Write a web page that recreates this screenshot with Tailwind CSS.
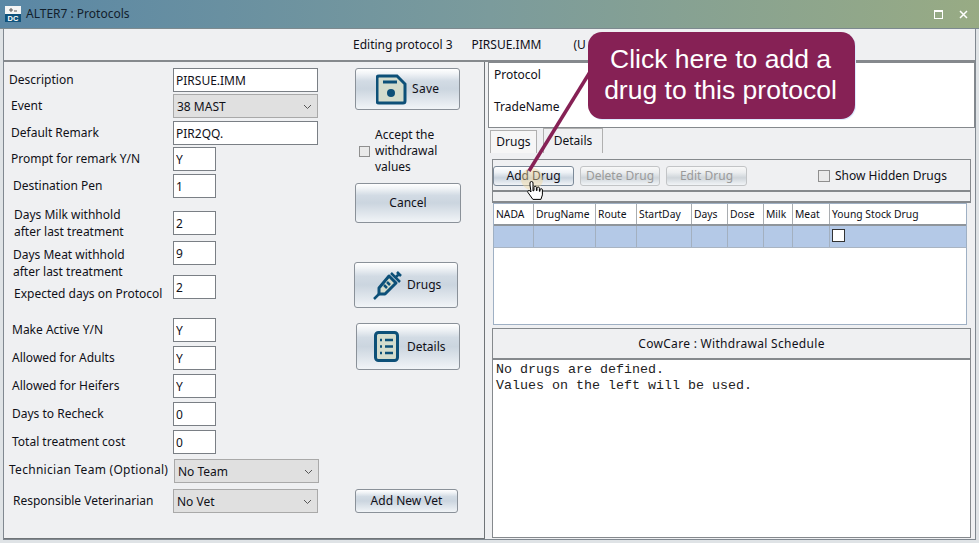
<!DOCTYPE html>
<html lang="en">
<head>
  <meta charset="UTF-8">
  <script src="https://cdn.jsdelivr.net/npm/@tailwindcss/browser@4"></script>
  <title>ALTER7 : Protocols</title>
</head>
<body>
  <div class="relative w-[979px] h-[543px] overflow-hidden flex flex-col bg-[#dfe3e6] font-['Noto_Sans',sans-serif] text-[12px] text-[#101018]">

    <!-- title bar -->
    <div class="h-[29px] flex-none flex items-center bg-[linear-gradient(90deg,#5a87a5,#7b9b9c_50%,#98ab84)] border-b border-[#7d8a8f]">
      <svg class="ml-[5px] w-[16px] h-[16px]" viewBox="0 0 16 16">
        <rect width="16" height="8" fill="#f4f4f4"/>
        <rect y="8" width="16" height="8" fill="#0f527c"/>
        <path d="M4 4h4M6 2v4M9 5h3" stroke="#555" stroke-width="1" fill="none"/>
        <text x="8" y="15" text-anchor="middle" font-family="Liberation Sans" font-weight="700" font-size="7.500" fill="#fff">DC</text>
      </svg>
      <span class="ml-[5px] text-[#12202c]">ALTER7 : Protocols</span>
      <div class="ml-auto mr-[11px] flex items-center gap-[16px]">
        <span class="w-[9px] h-[9px] border border-white border-t-2"></span>
        <svg class="w-[9px] h-[9px]" viewBox="0 0 9 9"><path d="M1 1l7 7M8 1l-7 7" stroke="#fff" stroke-width="1.500"/></svg>
      </div>
    </div>

    <!-- content -->
    <div class="flex-1 flex flex-col mx-[3px] mr-[3px] mb-[3px] bg-[#eff0f2] border-l border-r border-b border-[#808890]">
      <div class="h-[33px] flex-none flex items-center pl-[349px] pt-[1px] border-b-2 border-[#85898d]">
        <span>Editing protocol 3</span>
        <span class="ml-[19px]">PIRSUE.IMM</span>
        <span class="ml-[32px]">(U</span>
      </div>

      <div class="flex-1 flex min-h-0">
        <!-- left panel -->
        <div class="w-[481px] flex-none flex border-r border-b border-[#6f7478] pt-[6px]">
          <div class="w-[351px] flex-none flex flex-col">
            <div class="h-[24px] flex"><label class="w-[169px] pl-[5px] pt-[3px]">Description</label><input class="w-[145px] h-[24px] px-[2px] pt-[1px] bg-white border border-[#7a7f85]" value="PIRSUE.IMM"></div>
            <div class="h-[24px] mt-[2px] flex"><label class="w-[169px] pl-[7px] pt-[3px]">Event</label><div class="w-[145px] h-[24px] flex items-center justify-between px-[3px] pt-[2px] bg-[#e0e0e0] border border-[#a9a9a9]"><span>38 MAST</span><svg class="w-[9px] h-[6px] mr-[2px]" viewBox="0 0 9 6"><path d="M1 1l3.500 3.500L8 1" fill="none" stroke="#555"/></svg></div></div>
            <div class="h-[24px] mt-[3px] flex"><label class="w-[169px] pl-[7px] pt-[3px]">Default Remark</label><input class="w-[145px] h-[24px] px-[2px] pt-[1px] bg-white border border-[#7a7f85]" value="PIR2QQ."></div>
            <div class="h-[24px] mt-[2px] flex"><label class="w-[169px] pl-[7px] pt-[3px]">Prompt for remark Y/N</label><input class="w-[43px] h-[24px] px-[2px] pt-[1px] bg-white border border-[#7a7f85]" value="Y"></div>
            <div class="h-[24px] mt-[3px] flex"><label class="w-[169px] pl-[9px] pt-[3px]">Destination Pen</label><input class="w-[43px] h-[24px] px-[2px] pt-[1px] bg-white border border-[#7a7f85]" value="1"></div>
            <div class="h-[24px] mt-[13px] flex"><label class="w-[169px] pl-[10px] mt-[-5px] leading-[17px]">Days Milk withhold<br>after last treatment</label><input class="w-[43px] h-[24px] px-[2px] pt-[1px] bg-white border border-[#7a7f85]" value="2"></div>
            <div class="h-[24px] mt-[6px] flex"><label class="w-[169px] pl-[9px] mt-[5px] leading-[17px]">Days Meat withhold<br>after last treatment</label><input class="w-[43px] h-[24px] px-[2px] pt-[1px] bg-white border border-[#7a7f85]" value="9"></div>
            <div class="h-[24px] mt-[10px] flex"><label class="w-[169px] pl-[10px] mt-[10px] leading-[17px]">Expected days on Protocol</label><input class="w-[43px] h-[24px] px-[2px] pt-[1px] bg-white border border-[#7a7f85]" value="2"></div>
            <div class="h-[24px] mt-[19px] flex"><label class="w-[169px] pl-[8px] pt-[3px]">Make Active Y/N</label><input class="w-[43px] h-[24px] px-[2px] pt-[1px] bg-white border border-[#7a7f85]" value="Y"></div>
            <div class="h-[24px] mt-[4px] flex"><label class="w-[169px] pl-[8px] pt-[3px]">Allowed for Adults</label><input class="w-[43px] h-[24px] px-[2px] pt-[1px] bg-white border border-[#7a7f85]" value="Y"></div>
            <div class="h-[24px] mt-[4px] flex"><label class="w-[169px] pl-[8px] pt-[3px]">Allowed for Heifers</label><input class="w-[43px] h-[24px] px-[2px] pt-[1px] bg-white border border-[#7a7f85]" value="Y"></div>
            <div class="h-[24px] mt-[4px] flex"><label class="w-[169px] pl-[8px] pt-[3px]">Days to Recheck</label><input class="w-[43px] h-[24px] px-[2px] pt-[1px] bg-white border border-[#7a7f85]" value="0"></div>
            <div class="h-[24px] mt-[4px] flex"><label class="w-[169px] pl-[8px] pt-[3px]">Total treatment cost</label><input class="w-[43px] h-[24px] px-[2px] pt-[1px] bg-white border border-[#7a7f85]" value="0"></div>
            <div class="h-[24px] mt-[5px] flex"><label class="w-[170px] pl-[5px] pt-[2px] whitespace-nowrap tracking-[0.28px]">Technician Team (Optional)</label><div class="w-[145px] h-[24px] flex items-center justify-between px-[3px] pt-[2px] bg-[#e0e0e0] border border-[#a9a9a9]"><span>No Team</span><svg class="w-[9px] h-[6px] mr-[2px]" viewBox="0 0 9 6"><path d="M1 1l3.500 3.500L8 1" fill="none" stroke="#555"/></svg></div></div>
            <div class="h-[24px] mt-[6px] flex"><label class="w-[169px] pl-[9px] pt-[3px]">Responsible Veterinarian</label><div class="w-[145px] h-[24px] flex items-center justify-between px-[3px] pt-[2px] bg-[#e0e0e0] border border-[#a9a9a9]"><span>No Vet</span><svg class="w-[9px] h-[6px] mr-[2px]" viewBox="0 0 9 6"><path d="M1 1l3.500 3.500L8 1" fill="none" stroke="#555"/></svg></div></div>
          </div>

          <!-- button column -->
          <div class="flex-1 flex flex-col items-start">
            <button class="w-[105px] h-[42px] flex items-center rounded-[3px] border border-[#8a9199] bg-[linear-gradient(180deg,#fff,#f0f3f6_12%,#d2dbe4_30%,#cbd5df_50%,#f1f4f7)]">
              <svg class="ml-[20px] w-[31px] h-[31px]" viewBox="0 0 31 31"><path d="M3 2h18l8 8v17a2 2 0 0 1-2 2H3a2 2 0 0 1-2-2V4a2 2 0 0 1 2-2z" fill="#d4dccd" stroke="#0d5078" stroke-width="3"/><path d="M7 8h14" stroke="#0d5078" stroke-width="3"/><circle cx="15" cy="19" r="4" fill="#0d5078"/></svg>
              <span class="ml-[5px] mb-[1px] tracking-[0.3px]">Save</span>
            </button>
            <div class="mt-[17px] ml-[4px] flex items-center">
              <span class="w-[11px] h-[11px] border border-[#8f8f8f] bg-[#eaeaea]"></span>
              <span class="ml-[5px] leading-[16px]">Accept the<br>withdrawal<br>values</span>
            </div>
            <button class="mt-[8px] w-[106px] h-[40px] rounded-[3px] border border-[#8a9199] bg-[linear-gradient(180deg,#fff,#f0f3f6_12%,#d2dbe4_30%,#cbd5df_50%,#f1f4f7)]">Cancel</button>
            <button class="mt-[39px] ml-[-1px] w-[104px] h-[46px] flex items-center rounded-[3px] border border-[#8a9199] bg-[linear-gradient(180deg,#fff,#f0f3f6_12%,#d2dbe4_30%,#cbd5df_50%,#f1f4f7)]">
              <svg class="ml-[17px] w-[30px] h-[30px]" viewBox="0 0 30 30"><path d="M17 6l7 7-11 11H7v-6z" fill="#d4dccd" stroke="#0d5078" stroke-width="3" stroke-linejoin="round"/><path d="M7 24l-5 5M19 3l9 9M23 8l4-4M25 2l4 4M12 15l3 3M15 12l3 3" stroke="#0d5078" stroke-width="2.500" fill="none"/></svg>
              <span class="ml-[5px] mb-[1px]">Drugs</span>
            </button>
            <button class="mt-[15px] ml-[1px] w-[104px] h-[47px] flex items-center rounded-[3px] border border-[#8a9199] bg-[linear-gradient(180deg,#fff,#f0f3f6_12%,#d2dbe4_30%,#cbd5df_50%,#f1f4f7)]">
              <svg class="ml-[17px] w-[25px] h-[31px]" viewBox="0 0 25 31"><rect x="1.500" y="1.500" width="22" height="28" rx="3" fill="#d4dccd" stroke="#0d5078" stroke-width="3"/><path d="M6 9h2M11 9h8M6 15.500h2M11 15.500h8M6 22h2M11 22h8" stroke="#0d5078" stroke-width="2.500"/></svg>
              <span class="ml-[8px]">Details</span>
            </button>
            <button class="mt-[119px] w-[103px] h-[24px] rounded-[3px] border border-[#8a9199] bg-[linear-gradient(180deg,#fff,#f0f3f6_12%,#d2dbe4_30%,#cbd5df_50%,#f1f4f7)]">Add New Vet</button>
          </div>
        </div>

        <!-- right panel -->
        <div class="ml-[3px] flex-1 flex flex-col min-w-0 pb-[1px]">
          <div class="h-[66px] flex-none bg-white border border-[#85898d] pl-[5px] pt-[3px] leading-[17px]">
            <p>Protocol</p>
            <p class="mt-[15px]">TradeName</p>
          </div>
          <div class="h-[25px] flex-none flex items-end pl-[2px]">
            <span class="w-[47px] h-[23px] flex items-center justify-center bg-[#f6f6f6] border border-[#b0b0b0] border-b-0">Drugs</span>
            <span class="ml-[6px] w-[60px] h-[25px] flex items-center justify-center border-r border-l border-t border-[#b0b0b0]">Details</span>
          </div>
          <div class="mt-[6px] ml-[4px] mr-[4px] flex-1 flex flex-col min-h-0">
            <div class="h-[33px] flex-none flex items-center border border-b-2 border-[#85898d] pt-[2px]">
              <button class="w-[81px] h-[20px] rounded-[3px] border border-[#7c8a99] bg-[linear-gradient(180deg,#fff,#eef2f6_30%,#c9d3de_60%,#f1f4f7)]">Add Drug</button>
              <button class="ml-[6px] w-[80px] h-[20px] rounded-[3px] border border-[#c2c4c6] text-[#9a9a9a] bg-[linear-gradient(180deg,#f8f8f8,#eceef0_30%,#cfd5da_60%,#f1f4f7)]">Delete Drug</button>
              <button class="ml-[6px] w-[81px] h-[20px] rounded-[3px] border border-[#c2c4c6] text-[#9a9a9a] bg-[linear-gradient(180deg,#f8f8f8,#eceef0_30%,#cfd5da_60%,#f1f4f7)]">Edit Drug</button>
              <span class="ml-[71px] w-[12px] h-[12px] border border-[#8f8f8f] bg-[#eaeaea]"></span>
              <span class="ml-[5px]">Show Hidden Drugs</span>
            </div>
            <div class="h-[11px] flex-none border-x border-b-2 border-[#85898d]"></div>
            <div class="h-[122px] flex-none ml-[1px] mr-[4px] bg-white border border-[#9fb0c4] text-[10.3px]">
              <div class="grid grid-cols-[40px_62px_41px_55px_36px_36px_29px_37px_1fr] h-[22px] bg-white border-b-2 border-[#8f959b]">
                <span class="border-r border-[#a9adb1] pl-[2px] leading-[20px]">NADA</span>
                <span class="border-r border-[#a9adb1] pl-[2px] leading-[20px]">DrugName</span>
                <span class="border-r border-[#a9adb1] pl-[2px] leading-[20px]">Route</span>
                <span class="border-r border-[#a9adb1] pl-[2px] leading-[20px]">StartDay</span>
                <span class="border-r border-[#a9adb1] pl-[2px] leading-[20px]">Days</span>
                <span class="border-r border-[#a9adb1] pl-[2px] leading-[20px]">Dose</span>
                <span class="border-r border-[#a9adb1] pl-[2px] leading-[20px]">Milk</span>
                <span class="border-r border-[#a9adb1] pl-[2px] leading-[20px]">Meat</span>
                <span class="pl-[2px] leading-[20px]">Young Stock Drug</span>
              </div>
              <div class="grid grid-cols-[40px_62px_41px_55px_36px_36px_29px_37px_1fr] h-[22px] bg-[#b4c9e7] border-b border-[#a9b4c2]">
                <span class="border-r border-[#a3b0c0]"></span>
                <span class="border-r border-[#a3b0c0]"></span>
                <span class="border-r border-[#a3b0c0]"></span>
                <span class="border-r border-[#a3b0c0]"></span>
                <span class="border-r border-[#a3b0c0]"></span>
                <span class="border-r border-[#a3b0c0]"></span>
                <span class="border-r border-[#a3b0c0]"></span>
                <span class="border-r border-[#a3b0c0]"></span>
                <span class="pl-[2px] pt-[3px]"><span class="block w-[13px] h-[13px] bg-white border border-[#333]"></span></span>
              </div>
            </div>
            <div class="mt-[3px] h-[32px] flex-none flex items-center justify-center border border-b-2 border-[#85898d] tracking-[0.3px]">CowCare : Withdrawal Schedule</div>
            <div class="flex-1 bg-white border-x border-b border-[#85898d] pl-[3px] pt-[2px] font-['Liberation_Mono',monospace] text-[13.33px] leading-[16px] text-[#222]">
              <p>No drugs are defined.</p>
              <p>Values on the left will be used.</p>
            </div>
          </div>
        </div>
      </div>
    </div>

    <!-- callout pointing at the Add Drug button -->
    <svg class="absolute left-0 top-0 w-[979px] h-[543px] pointer-events-none" viewBox="0 0 979 543">
      <circle cx="532" cy="179" r="11" fill="#f2d9a0" fill-opacity="0.45"/>
      <path d="M590 72L529 171" stroke="#862155" stroke-width="3.500" fill="none"/>
      <path transform="translate(0 3)" d="M530 182v-2a1.500 1.500 0 0 1 3 0v8l1 -0.500v-3a1.200 1.200 0 0 1 2.400 0v3l0.600 .2v-2.500a1.200 1.200 0 0 1 2.400 0v3l.6 .2v-1.500a1.200 1.200 0 0 1 2.400 0v5l-1.500 4.500h-8l-5-7c-.8-1.500 1-2.500 2-1.500l1.100 1.100z" fill="#fff" stroke="#000" stroke-width="1"/>
    </svg>
    <div class="absolute left-[588px] top-[32px] w-[267px] h-[87px] flex items-center justify-center text-center rounded-[14px] bg-[#862155] text-white font-['Liberation_Sans',sans-serif] text-[26.5px] leading-[31px] pb-[2px] pr-[2px] shadow-[1px_1px_0_#dbeafe]">
      Click here to add a<br>drug to this protocol
    </div>
  </div>
</body>
</html>
